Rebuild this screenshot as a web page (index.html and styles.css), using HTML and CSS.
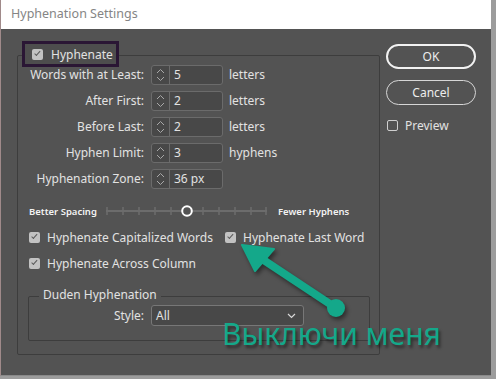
FILE: index.html
```html
<!DOCTYPE html>
<html lang="en">
<head>
  <meta charset="UTF-8">
  <title>Hyphenation Settings</title>
  <link rel="stylesheet" href="styles.css">
</head>
<body>
  <div class="window">
    <div class="titlebar">Hyphenation Settings</div>

    <div class="dialog">
      <!-- Main group -->
      <div class="group">
        <label class="hyph-legend"><span class="cb checked"></span>Hyphenate</label>

        <div class="fields">
          <span class="lbl">Words with at Least:</span>
          <div class="spin"><span class="arrows"><svg width="17" height="18" viewBox="0 0 17 18"><path d="M5 7l3.5-3.5L12 7M5 11l3.5 3.5L12 11" fill="none" stroke="#a8a8a8"/></svg></span><span class="val">5</span></div>
          <span class="unit">letters</span>

          <span class="lbl">After First:</span>
          <div class="spin"><span class="arrows"><svg width="17" height="18" viewBox="0 0 17 18"><path d="M5 7l3.5-3.5L12 7M5 11l3.5 3.5L12 11" fill="none" stroke="#a8a8a8"/></svg></span><span class="val">2</span></div>
          <span class="unit">letters</span>

          <span class="lbl">Before Last:</span>
          <div class="spin"><span class="arrows"><svg width="17" height="18" viewBox="0 0 17 18"><path d="M5 7l3.5-3.5L12 7M5 11l3.5 3.5L12 11" fill="none" stroke="#a8a8a8"/></svg></span><span class="val">2</span></div>
          <span class="unit">letters</span>

          <span class="lbl">Hyphen Limit:</span>
          <div class="spin"><span class="arrows"><svg width="17" height="18" viewBox="0 0 17 18"><path d="M5 7l3.5-3.5L12 7M5 11l3.5 3.5L12 11" fill="none" stroke="#a8a8a8"/></svg></span><span class="val">3</span></div>
          <span class="unit">hyphens</span>

          <span class="lbl">Hyphenation Zone:</span>
          <div class="spin"><span class="arrows"><svg width="17" height="18" viewBox="0 0 17 18"><path d="M5 7l3.5-3.5L12 7M5 11l3.5 3.5L12 11" fill="none" stroke="#a8a8a8"/></svg></span><span class="val">36 px</span></div>
          <span></span>
        </div>

        <div class="slider-row">
          <span class="slider-lbl first">Better Spacing</span>
          <svg class="slider" width="162" height="14" viewBox="0 0 162 14">
            <line x1="0" y1="7" x2="161" y2="7" stroke="#6c6c6c" stroke-width="2"/>
            <g stroke="#6c6c6c" stroke-width="1.5">
              <line x1="1" y1="3" x2="1" y2="11"/>
              <line x1="17" y1="3" x2="17" y2="11"/>
              <line x1="33" y1="3" x2="33" y2="11"/>
              <line x1="49" y1="3" x2="49" y2="11"/>
              <line x1="65" y1="3" x2="65" y2="11"/>
              <line x1="97" y1="3" x2="97" y2="11"/>
              <line x1="113" y1="3" x2="113" y2="11"/>
              <line x1="129" y1="3" x2="129" y2="11"/>
              <line x1="145" y1="3" x2="145" y2="11"/>
              <line x1="160" y1="3" x2="160" y2="11"/>
            </g>
            <circle cx="81" cy="7" r="4.8" fill="#535353" stroke="#fff" stroke-width="2"/>
          </svg>
          <span class="slider-lbl">Fewer Hyphens</span>
        </div>

        <div class="check-row">
          <label class="check wide"><span class="cb checked"></span>Hyphenate Capitalized Words</label>
          <label class="check"><span class="cb checked"></span>Hyphenate Last Word</label>
        </div>
        <div class="check-row second">
          <label class="check"><span class="cb checked"></span>Hyphenate Across Column</label>
        </div>

        <div class="duden">
          <span class="duden-legend">Duden Hyphenation</span>
          <div class="style-row">
            <span class="style-lbl">Style:</span>
            <div class="select">
              <span>All</span>
              <svg width="9" height="6" viewBox="0 0 9 6"><path d="M1 1l3.5 3.5L8 1" fill="none" stroke="#d8d8d8" stroke-width="1.2"/></svg>
            </div>
          </div>
        </div>
      </div>

      <!-- Buttons -->
      <div class="side">
        <button class="btn primary">OK</button>
        <button class="btn">Cancel</button>
        <label class="check preview"><span class="cb"></span>Preview</label>
      </div>
    </div>

    <!-- Annotation -->
    <svg class="arrow" width="496" height="379" viewBox="0 0 496 379">
      <g fill="#14a88a" stroke="#14a88a">
        <line x1="336" y1="308" x2="262" y2="259" stroke-width="8" stroke-linecap="round"/>
        <polygon points="242,245 274,249 255,271" stroke-width="2" stroke-linejoin="round"/>
        <circle cx="336" cy="308" r="9" stroke="none"/>
      </g>
    </svg>
    <div class="note">Выключи меня</div>
  </div>
</body>
</html>
```

FILE: styles.css
```css
/* Global */
body {
  margin: 0;
  background-color: #9c9c9c;
  font-family: 'Noto Sans', sans-serif;
  font-size: 12px;
  color: #e2e2e2;
}

.window {
  position: relative;
  width: 491px;
  height: 376px;
  border-left: 1px solid #a08a8a;
  box-sizing: border-box;
  border-bottom: 1px solid #8a8a8a;
}

.titlebar {
  height: 29px;
  line-height: 28px;
  padding-left: 10px;
  background-color: #fff;
  color: #858585;
  font-size: 12.5px;
}

.dialog {
  display: flex;
  align-items: flex-start;
  height: 346px;
  padding-left: 16px;
  box-sizing: border-box;
  background-color: #535353;
}

/* Main group box */
.group {
  width: 363px;
  height: 300px;
  margin-top: 26px;
  box-sizing: border-box;
  border: 1px solid #3d3d3d;
  border-radius: 2px;
}

.hyph-legend {
  display: flex;
  align-items: center;
  gap: 8px;
  width: 97px;
  height: 26px;
  box-sizing: border-box;
  margin: -15px 0 -2px 4px;
  padding-left: 7px;
  border: 3px solid #2a1634;
  background-color: #4d4d4d;
  position: relative;
}

.cb {
  display: inline-block;
  width: 11px;
  height: 11px;
  box-sizing: border-box;
  border: 1px solid #cfcfcf;
  border-radius: 2px;
  flex: none;
}

.cb.checked {
  border: none;
  background-color: #c2c2c2;
  position: relative;
}

.cb.checked::after {
  content: "";
  position: absolute;
  left: 3px;
  top: 3px;
  width: 5px;
  height: 2px;
  border-left: 1.5px solid #5c5c5c;
  border-bottom: 1.5px solid #5c5c5c;
  transform: rotate(-48deg);
  transform-origin: 30% 60%;
}

/* Spinner fields */
.fields {
  display: grid;
  grid-template-columns: 126px 72px auto;
  column-gap: 7px;
  row-gap: 6px;
  line-height: 20px;
}

.lbl {
  text-align: right;
}

.unit {
  margin-left: -1px;
}

.spin {
  display: flex;
  height: 20px;
  box-sizing: border-box;
  border: 1px solid #6b6b6b;
  border-radius: 3px;
  background-color: #484848;
}

.arrows {
  display: flex;
  width: 17px;
  border-right: 1px solid #6b6b6b;
}

.val {
  padding-left: 4px;
  line-height: 18px;
}

/* Slider */
.slider-row {
  display: flex;
  align-items: center;
  height: 14px;
  margin-top: 15px;
  padding-left: 11px;
}

.slider-lbl {
  font-size: 9.5px;
  font-weight: 600;
  color: #f2f2f2;
}

.slider-lbl.first {
  width: 77px;
}

.slider {
  margin-right: 10px;
}

/* Checkbox rows */
.check-row {
  display: flex;
  align-items: center;
  height: 16px;
  margin-top: 11px;
  padding-left: 11px;
}

.check-row.second {
  margin-top: 10px;
}

.check {
  display: flex;
  align-items: center;
  gap: 7px;
}

.check.wide {
  width: 196px;
}

/* Duden group */
.duden {
  height: 45px;
  margin: 25px 9px 0 10px;
  box-sizing: border-box;
  border: 1px solid #3d3d3d;
  border-radius: 2px;
}

.duden-legend {
  display: block;
  width: fit-content;
  height: 16px;
  line-height: 16px;
  margin: -10px 0 0 10px;
  padding: 0 4px;
  background-color: #535353;
}

.style-row {
  display: flex;
  align-items: center;
  gap: 7px;
  margin-top: 2px;
}

.style-lbl {
  width: 115px;
  text-align: right;
}

.select {
  display: flex;
  align-items: center;
  justify-content: space-between;
  width: 153px;
  height: 21px;
  box-sizing: border-box;
  padding: 0 7px 0 4px;
  border: 1px solid #777;
  border-radius: 3px;
  background-color: #484848;
}

/* Side buttons */
.side {
  display: flex;
  flex-direction: column;
  width: 90px;
  margin-left: 6px;
  padding-top: 15px;
}

.btn {
  height: 25px;
  box-sizing: border-box;
  border: 1px solid #d6d6d6;
  border-radius: 13px;
  background: transparent;
  color: #ededed;
  font-family: inherit;
  font-size: 12px;
  padding: 0;
}

.btn.primary {
  border: 2px solid #f2f2f2;
}

.btn + .btn {
  margin-top: 11px;
}

.preview {
  height: 15px;
  margin-top: 13px;
  padding-left: 1px;
}

/* Annotation */
.arrow {
  position: absolute;
  left: -1px;
  top: 0;
  pointer-events: none;
  filter: drop-shadow(2px 3px 2px rgba(0, 0, 0, 0.45));
}

.note {
  position: absolute;
  left: 221px;
  top: 314px;
  font-size: 30px;
  line-height: 40px;
  color: #14a88a;
  text-shadow: 2px 3px 3px rgba(0, 0, 0, 0.45);
  white-space: nowrap;
}
```
